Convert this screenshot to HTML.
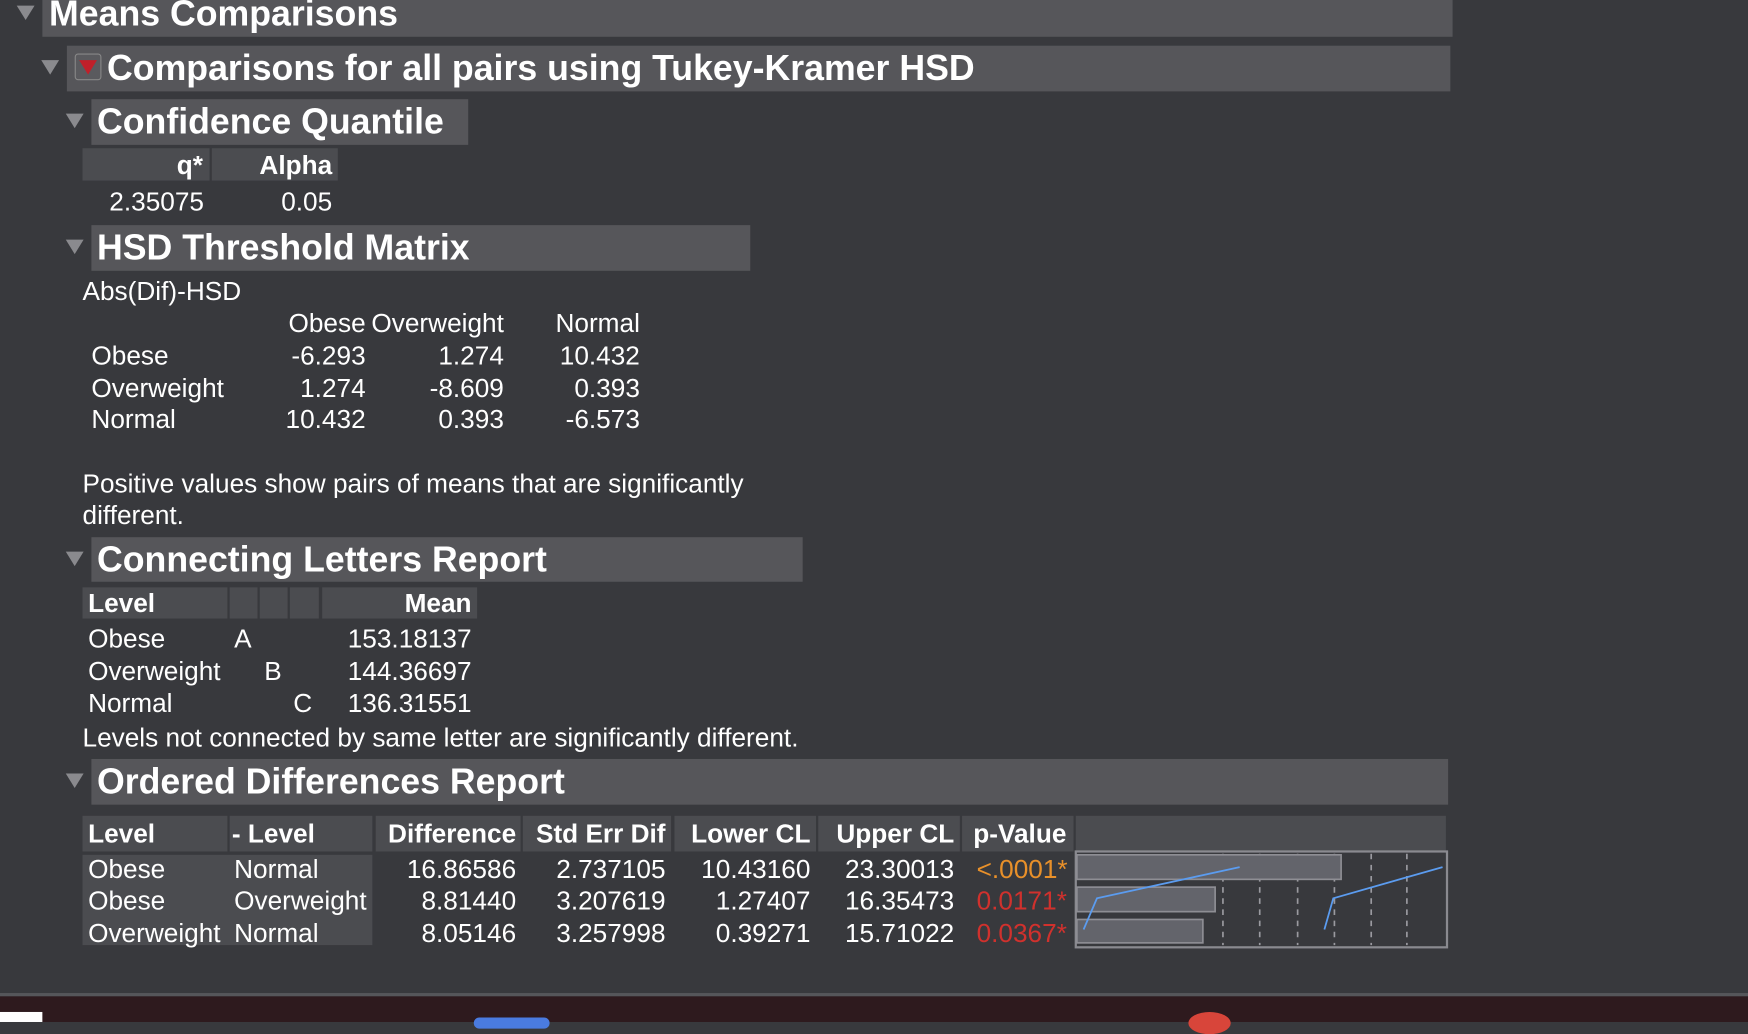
<!DOCTYPE html>
<html><head><meta charset="utf-8"><style>
html,body{margin:0;padding:0;width:1748px;height:1022px;overflow:hidden;background:#38393d;}
#s{position:absolute;left:0;top:0;width:1568px;height:917px;transform:scale(1.1148,1.1145);transform-origin:0 0;background:#38393d;font-family:"Liberation Sans",Arial,sans-serif;color:#fff;}
.a{position:absolute;white-space:nowrap;}
.hb{position:absolute;background:#56565a;}
.ht{position:absolute;font-weight:bold;font-size:32px;line-height:30px;white-space:nowrap;}
.tri{position:absolute;width:0;height:0;border-left:8px solid transparent;border-right:8px solid transparent;border-top:13px solid #8a8a8e;}
.t{position:absolute;font-size:23.5px;line-height:24px;white-space:nowrap;}
.r{text-align:right;}
.b{font-weight:bold;}
.c{position:absolute;background:#4b4c50;}
</style></head><body><div id="s">
<div class="hb" style="left:38px;top:0;width:1265px;height:33px"></div>
<div class="tri" style="left:15px;top:5px"></div>
<div class="ht" style="left:44px;top:-3px">Means Comparisons</div>
<div class="hb" style="left:60px;top:41px;width:1241px;height:41px"></div>
<div class="tri" style="left:37px;top:54px"></div>
<div class="a" style="left:67px;top:48px;width:22px;height:22px;border:1px solid #888;border-radius:3px;background:#5a5a5e"></div>
<div class="a" style="left:71px;top:54px;width:0;height:0;border-left:8px solid transparent;border-right:8px solid transparent;border-top:13px solid #c0202a"></div>
<div class="ht" style="left:96px;top:46px">Comparisons for all pairs using Tukey-Kramer HSD</div>
<div class="hb" style="left:82px;top:89px;width:338px;height:41px"></div>
<div class="tri" style="left:59px;top:102px"></div>
<div class="ht" style="left:87px;top:94px">Confidence Quantile</div>
<div class="c" style="left:74px;top:133px;width:114px;height:29px"></div>
<div class="c" style="left:190px;top:133px;width:113px;height:29px"></div>
<div class="t b r" style="left:74px;top:136px;width:108px">q*</div>
<div class="t b r" style="left:190px;top:136px;width:108px">Alpha</div>
<div class="t r" style="left:74px;top:169px;width:109px">2.35075</div>
<div class="t r" style="left:190px;top:169px;width:108px">0.05</div>
<div class="hb" style="left:82px;top:202px;width:591px;height:41px"></div>
<div class="tri" style="left:59px;top:215px"></div>
<div class="ht" style="left:87px;top:207px">HSD Threshold Matrix</div>
<div class="t" style="left:74px;top:249px">Abs(Dif)-HSD</div>
<div class="t r" style="left:228px;top:278px;width:100px">Obese</div>
<div class="t r" style="left:330px;top:278px;width:122px">Overweight</div>
<div class="t r" style="left:470px;top:278px;width:104px">Normal</div>
<div class="t" style="left:82px;top:307px">Obese</div>
<div class="t r" style="left:228px;top:307px;width:100px">-6.293</div>
<div class="t r" style="left:330px;top:307px;width:122px">1.274</div>
<div class="t r" style="left:470px;top:307px;width:104px">10.432</div>
<div class="t" style="left:82px;top:336px">Overweight</div>
<div class="t r" style="left:228px;top:336px;width:100px">1.274</div>
<div class="t r" style="left:330px;top:336px;width:122px">-8.609</div>
<div class="t r" style="left:470px;top:336px;width:104px">0.393</div>
<div class="t" style="left:82px;top:364px">Normal</div>
<div class="t r" style="left:228px;top:364px;width:100px">10.432</div>
<div class="t r" style="left:330px;top:364px;width:122px">0.393</div>
<div class="t r" style="left:470px;top:364px;width:104px">-6.573</div>
<div class="t" style="left:74px;top:422px">Positive values show pairs of means that are significantly</div>
<div class="t" style="left:74px;top:450px">different.</div>
<div class="hb" style="left:82px;top:482px;width:638px;height:40px"></div>
<div class="tri" style="left:59px;top:495px"></div>
<div class="ht" style="left:87px;top:487px">Connecting Letters Report</div>
<div class="c" style="left:74px;top:527px;width:130px;height:28px"></div>
<div class="c" style="left:206px;top:527px;width:25px;height:28px"></div>
<div class="c" style="left:233px;top:527px;width:25px;height:28px"></div>
<div class="c" style="left:260px;top:527px;width:26px;height:28px"></div>
<div class="c" style="left:289px;top:527px;width:139px;height:28px"></div>
<div class="t b" style="left:79px;top:529px">Level</div>
<div class="t b r" style="left:289px;top:529px;width:134px">Mean</div>
<div class="t" style="left:79px;top:561px">Obese</div><div class="t" style="left:210px;top:561px">A</div><div class="t r" style="left:289px;top:561px;width:134px">153.18137</div>
<div class="t" style="left:79px;top:590px">Overweight</div><div class="t" style="left:237px;top:590px">B</div><div class="t r" style="left:289px;top:590px;width:134px">144.36697</div>
<div class="t" style="left:79px;top:619px">Normal</div><div class="t" style="left:263px;top:619px">C</div><div class="t r" style="left:289px;top:619px;width:134px">136.31551</div>
<div class="t" style="left:74px;top:650px">Levels not connected by same letter are significantly different.</div>
<div class="hb" style="left:82px;top:681px;width:1217px;height:41px"></div>
<div class="tri" style="left:59px;top:694px"></div>
<div class="ht" style="left:87px;top:686px">Ordered Differences Report</div>
<div class="c" style="left:74px;top:732px;width:130px;height:32px"></div>
<div class="c" style="left:206px;top:732px;width:128px;height:32px"></div>
<div class="c" style="left:337px;top:732px;width:130px;height:32px"></div>
<div class="c" style="left:469px;top:732px;width:133px;height:32px"></div>
<div class="c" style="left:605px;top:732px;width:127px;height:32px"></div>
<div class="c" style="left:734px;top:732px;width:127px;height:32px"></div>
<div class="c" style="left:863px;top:732px;width:100px;height:32px"></div>
<div class="c" style="left:965px;top:732px;width:332px;height:32px"></div>
<div class="t b" style="left:79px;top:736px">Level</div>
<div class="t b" style="left:208px;top:736px">- Level</div>
<div class="t b r" style="left:337px;top:736px;width:126px">Difference</div>
<div class="t b r" style="left:469px;top:736px;width:128px">Std Err Dif</div>
<div class="t b r" style="left:605px;top:736px;width:122px">Lower CL</div>
<div class="t b r" style="left:734px;top:736px;width:122px">Upper CL</div>
<div class="t b" style="left:873px;top:736px">p-Value</div>
<div class="c" style="left:74px;top:767px;width:260px;height:81px"></div>
<div class="t" style="left:79px;top:768px">Obese</div><div class="t" style="left:210px;top:768px">Normal</div>
<div class="t r" style="left:337px;top:768px;width:126px">16.86586</div><div class="t r" style="left:469px;top:768px;width:128px">2.737105</div><div class="t r" style="left:605px;top:768px;width:122px">10.43160</div><div class="t r" style="left:734px;top:768px;width:122px">23.30013</div><div class="t" style="left:876px;top:768px;color:#e8902a">&lt;.0001*</div>
<div class="t" style="left:79px;top:796px">Obese</div><div class="t" style="left:210px;top:796px">Overweight</div>
<div class="t r" style="left:337px;top:796px;width:126px">8.81440</div><div class="t r" style="left:469px;top:796px;width:128px">3.207619</div><div class="t r" style="left:605px;top:796px;width:122px">1.27407</div><div class="t r" style="left:734px;top:796px;width:122px">16.35473</div><div class="t" style="left:876px;top:796px;color:#d0312d">0.0171*</div>
<div class="t" style="left:79px;top:825px">Overweight</div><div class="t" style="left:210px;top:825px">Normal</div>
<div class="t r" style="left:337px;top:825px;width:126px">8.05146</div><div class="t r" style="left:469px;top:825px;width:128px">3.257998</div><div class="t r" style="left:605px;top:825px;width:122px">0.39271</div><div class="t r" style="left:734px;top:825px;width:122px">15.71022</div><div class="t" style="left:876px;top:825px;color:#d0312d">0.0367*</div>
<svg class="a" style="left:963px;top:762px" width="337" height="90" viewBox="963 762 337 90">
<rect x="965" y="764" width="333" height="86" fill="#38393d" stroke="#8a8a90" stroke-width="2"/>
<g stroke="#9a9aa0" stroke-width="1.5" stroke-dasharray="5,5">
<line x1="1097" y1="766" x2="1097" y2="848"/><line x1="1130" y1="766" x2="1130" y2="848"/><line x1="1164" y1="766" x2="1164" y2="848"/><line x1="1197" y1="766" x2="1197" y2="848"/><line x1="1230" y1="766" x2="1230" y2="848"/><line x1="1262" y1="766" x2="1262" y2="848"/>
</g>
<g fill="#63646b" stroke="#8e8e94" stroke-width="1.5">
<rect x="966" y="767" width="237" height="22"/><rect x="966" y="796" width="124" height="22"/><rect x="966" y="825" width="113" height="21"/>
</g>
<g fill="none" stroke="#5b9cf0" stroke-width="1.6">
<polyline points="972,834 984,806 1112,778"/><polyline points="1188,834 1196,806 1294,778"/>
</g>
</svg>
<div class="a" style="left:0;top:891px;width:1568px;height:3px;background:#55565a"></div>
<div class="a" style="left:0;top:894px;width:1568px;height:23px;background:#2e1a1e"></div>
<div class="a" style="left:0;top:908px;width:38px;height:9px;background:#fff"></div>
<div class="a" style="left:425px;top:913px;width:68px;height:10px;border-radius:10px;background:#4a7be0"></div>
<div class="a" style="left:1066px;top:908px;width:38px;height:20px;border-radius:50%;background:#d8453a"></div>
</div></body></html>
